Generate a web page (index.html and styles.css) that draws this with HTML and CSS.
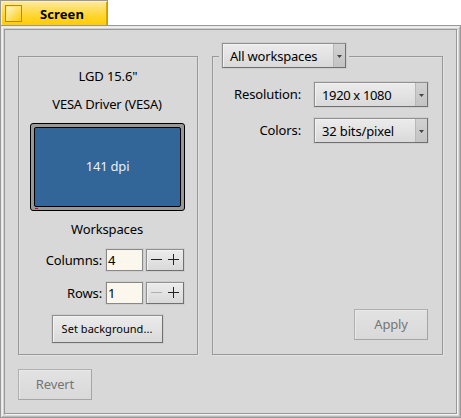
FILE: index.html
```html
<!DOCTYPE html>
<html lang="en">
<head>
<meta charset="utf-8">
<title>Screen</title>
<link rel="stylesheet" href="styles.css">
</head>
<body>
<div class="tab"><span class="close"></span><span class="title">Screen</span></div>
<main class="window">
  <div class="content">
    <div class="groups">
      <section class="group monitor-group">
        <p class="line">LGD 15.6"</p>
        <p class="line driver">VESA Driver (VESA)</p>
        <div class="monitor"><div class="display">141 dpi</div><i class="led"></i></div>
        <p class="line heading">Workspaces</p>
        <div class="row columns">
          <label>Columns:</label><span class="field">4</span>
          <span class="spinner"><svg width="36" height="20"><path d="M4 9.5h11M21 9.5h11M26.5 4v11"/></svg></span>
        </div>
        <div class="row">
          <label>Rows:</label><span class="field">1</span>
          <span class="spinner"><svg width="36" height="20"><path class="off" d="M4 9.5h11"/><path d="M21 9.5h11M26.5 4v11"/></svg></span>
        </div>
        <button class="button background">Set background...</button>
      </section>
      <section class="group mode-group">
        <div class="menu scope"><span>All workspaces</span><i class="arrow"></i></div>
        <div class="setting"><label>Resolution:</label><div class="menu"><span>1920 x 1080</span><i class="arrow"></i></div></div>
        <div class="setting"><label>Colors:</label><div class="menu depth"><span>32 bits/pixel</span><i class="arrow"></i></div></div>
        <button class="button apply" disabled>Apply</button>
      </section>
    </div>
    <button class="button revert" disabled>Revert</button>
  </div>
</main>
</body>
</html>
```
FILE: styles.css
```css
* { box-sizing: border-box; }
body {
  margin: 0;
  height: 418px;
  overflow: hidden;
  background: #fff;
  color: #000;
  font: 13px/18px "Noto Sans", sans-serif;
  white-space: nowrap;
}
p { margin: 0; }
.tab {
  display: flex;
  width: 108px;
  height: 26px;
  padding: 4px 0 0 4px;
  border: 1px solid #989898;
  border-bottom: 0;
  background: linear-gradient(#ffe9a0, #ffd52e 60%, #ffcb00);
  box-shadow: inset 1px 1px #ffefb8, inset -1px 0 #d8a800;
}
.close {
  width: 17px;
  height: 17px;
  border: 1px solid #b88c00;
  background: linear-gradient(135deg, #fff8dc, #ffcb00);
  box-shadow: inset 1px 1px #ffe27a;
}
.title { margin-left: 18px; font-weight: 700; letter-spacing: 0.1px; }
.window {
  width: 461px;
  height: 393px;
  margin-top: -1px;
  padding: 3px;
  border: 1px solid #989898;
  background: #d8d8d8;
  box-shadow: inset 1px 1px #e8e8e8, inset -1px -1px #b8b8b8, inset 2px 2px #f0f0f0, inset -2px -2px #d8d8d8, inset 0 0 0 3px #d0d0d0;
}
.content {
  width: 453px;
  height: 385px;
  padding: 26px 13px 0;
  border: 1px solid #989898;
  box-shadow: 1px 1px #f4f4f4;
}
.groups { display: flex; gap: 14px; }
.group {
  height: 299px;
  border: 1px solid #989898;
  box-shadow: 1px 1px #e2e2e2, inset 1px 1px #e0e0e0;
}
.monitor-group { width: 180px; padding-top: 10px; }
.line { margin-bottom: 10px; text-align: center; letter-spacing: -0.13px; }
.driver { padding-right: 2px; letter-spacing: -0.2px; }
.heading { padding-right: 2px; }
.monitor {
  position: relative;
  width: 155px;
  height: 88px;
  margin: 0 0 9px 11px;
  padding: 3px;
  border: 1px solid #000;
  border-radius: 3px;
  background: #989898;
}
.display {
  width: 147px;
  height: 80px;
  border: 1px solid #000;
  border-radius: 2px;
  background: #336698;
  color: #ebeff4;
  text-align: center;
  line-height: 77px;
  letter-spacing: -0.2px;
}
.led { position: absolute; left: 4px; bottom: 1px; width: 3px; height: 1px; background: #e00000; }
.row { display: flex; height: 22px; margin-bottom: 11px; line-height: 22px; }
.columns { margin-top: 11px; }
.row label { width: 83px; margin-right: 4px; text-align: right; letter-spacing: -0.13px; }
.field {
  width: 37px;
  margin-right: 3px;
  padding-left: 1px;
  border: 1px solid #888;
  background: #fcf7ec;
  box-shadow: 0 0 0 1px #cecece;
  line-height: 20px;
}
.spinner, .menu, .button {
  border: 1px solid #909090;
  border-right-color: #707070;
  border-bottom-color: #707070;
  background: linear-gradient(#ebebeb, #e3e3e3 50%, #d9d9d9);
  box-shadow: 0 0 0 1px #cdcdcd, inset 1px 1px #f2f2f2;
}
.spinner { width: 38px; height: 22px; }
.spinner svg { display: block; fill: none; stroke: #222; stroke-width: 1; }
.spinner .off { stroke: #b0b0b0; }
.button {
  display: block;
  padding: 0;
  font: inherit;
  color: #000;
  text-align: center;
}
.button:disabled {
  width: 74px;
  height: 31px;
  padding-bottom: 2px;
  border-color: #b0b0b0 #a5a5a5 #a5a5a5 #b0b0b0;
  background: linear-gradient(#e2e2e2, #d9d9d9);
  box-shadow: inset 1px 1px #e8e8e8;
  color: #757575;
  letter-spacing: -0.15px;
}
.background.button { width: 111px; height: 28px; margin-left: 33px; padding-right: 1px; font-size: 11px; letter-spacing: 0.04px; }
.mode-group { width: 231px; }
.menu { display: flex; width: 114px; height: 25px; line-height: 25px; letter-spacing: -0.35px; }
.menu span { flex: 1; padding-left: 7px; }
.arrow {
  display: flex;
  width: 12px;
  align-items: center;
  justify-content: center;
  border-left: 1px solid #b8b8b8;
  background: linear-gradient(#d2d2d2, #c3c3c3);
}
.arrow::before {
  content: "";
  width: 5px;
  height: 3px;
  margin-top: 2px;
  background: #444;
  clip-path: polygon(0 0, 100% 0, 50% 100%);
}
.scope {
  width: 124px;
  margin: -14px 0 14px 9px;
  outline: 2px solid #d8d8d8;
  outline-offset: 1px;
  letter-spacing: -0.2px;
}
.depth { letter-spacing: -0.15px; }
.setting { display: flex; margin-bottom: 11px; }
.setting label { width: 88px; margin-right: 13px; text-align: right; line-height: 24px; letter-spacing: -0.13px; }
.apply { margin: 166px 0 0 141px; }
.revert { margin-top: 14px; }
```
